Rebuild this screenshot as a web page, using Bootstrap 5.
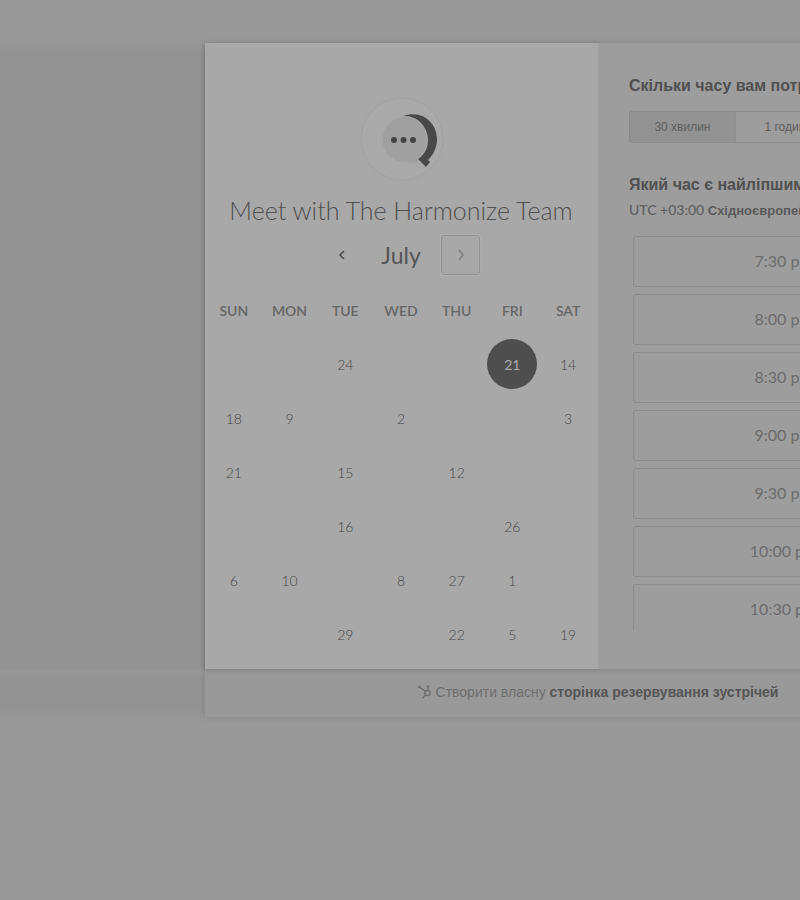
<!DOCTYPE html>
<html lang="uk">
<head>
<meta charset="utf-8">
<meta name="viewport" content="width=device-width, initial-scale=1">
<title>Meet with The Harmonize Team</title>
<link href="https://cdn.jsdelivr.net/npm/bootstrap@5.3.0/dist/css/bootstrap.min.css" rel="stylesheet">
<style>
body{background:#999;color:#555;font-family:"Liberation Sans",Arial,sans-serif}
.stage{padding:43px 0 24px;overflow:hidden}
.side-shade{flex:0 0 205px;margin-top:-6px;margin-bottom:-4px;background:linear-gradient(to bottom,#999 0,#929292 18px,#929292 calc(100% - 54px),#979797 calc(100% - 50px),#979797 calc(100% - 48px),#929292 calc(100% - 42px),#929292 calc(100% - 14px),#999 100%)}
.scheduler{flex:0 0 786px;border-radius:3px;background:#999;box-shadow:0 1px 7px rgba(0,0,0,.12)}
.panels{box-shadow:0 2px 5px rgba(0,0,0,.1)}
.date-panel{background:#a8a8a8;padding:52px 2px 8px 1px;box-shadow:0 0 4px rgba(0,0,0,.08)}
.time-panel{background:#9d9d9d;padding:33px 31px 0}
.latin{font-family:Lato,"Noto Sans",sans-serif}
.team-name{font-size:25px;line-height:32px;font-weight:300;color:#505050;margin-top:11px}
.month-bar{height:42px;margin-top:8px}
.month-name{font-size:23px;line-height:32px;width:80px;color:#555}
.month-btn{width:39px;height:40px;padding:0;border:1px solid transparent;border-radius:3px;background:none;color:#4c4c4c;line-height:1}
.month-btn svg{margin-bottom:2px}
.month-btn:disabled{border-color:#929292;outline:1px solid #b0b0b0;color:#808080}
.days{table-layout:fixed;width:100%;margin-top:8px;text-align:center;color:#484848;font-size:14px;font-weight:300}
.days th{height:53px;font-weight:600;font-size:14px;color:#666;text-align:center;vertical-align:middle;padding:0}
.days td{height:54px;padding:0;vertical-align:middle}
.picked{width:50px;height:50px;border:0;border-radius:50%;background:#4e4e4e;color:#aaa;padding:0}
.ask{font-size:16px;line-height:20px;font-weight:700;color:#505050}
.lengths{width:318px;height:32px;margin-top:15px;border:1px solid #8a8a8a;border-radius:3px}
.lengths button{border:0;background:none;color:#606060;font-size:12px;padding:0}
.lengths button+button{border-left:1px solid #8f8f8f}
.lengths button.chosen{background:#929292}
.zone{font-size:14px;line-height:20px;font-weight:500;color:#606060;margin-top:5px}
.zone b{font-family:"Liberation Sans",sans-serif;font-size:13px;color:#5a5a5a}
.slots{height:394px;gap:7px;margin-top:15px;padding-left:4px;padding-right:26px;overflow:hidden}
.slots button{flex:0 0 51px;border:1px solid #8b8b8b;border-radius:3px;background:none;color:#6c6c6c;font-size:16px;padding:0 0 2px}
.credit{height:48px;font-size:14px;color:#6e6e6e;padding-bottom:2px}
.credit a{color:#555;font-weight:700;text-decoration:none}
</style>
</head>
<body>
<main class="stage d-flex">
  <div class="side-shade"></div>
  <div class="scheduler">
    <div class="panels d-flex">
      <section class="date-panel w-50 text-center latin">
        <svg class="d-block mx-auto" width="88" height="88" viewBox="0 0 88 88" aria-hidden="true">
          <circle cx="45" cy="44" r="41" fill="#a9a9a9" stroke="#a2a2a2" stroke-width="1"/>
          <circle cx="45" cy="44" r="38" fill="none" stroke="#adadad" stroke-width="1" stroke-dasharray="5 2"/>
          <path d="M46 21C65 14 81 28 80 46C79 54 76 60 71 65L73 67L69 72L61 64C74 56 74 37 63 27C58 22 52 21 46 21Z" fill="#484848"/>
          <path d="M48 22A22.500 22.500 0 1 0 48 67L60 68L61 63C72 55 72 37 63 28C59 24 54 22 48 22Z" fill="#a0a0a0"/>
          <g fill="#444"><circle cx="37" cy="45" r="3"/><circle cx="46.500" cy="45" r="3"/><circle cx="56" cy="45" r="3"/></g>
        </svg>
        <h1 class="team-name mb-0">Meet with The Harmonize Team</h1>
        <div class="month-bar d-flex justify-content-center align-items-center">
          <button class="month-btn" aria-label="Попередній місяць"><svg width="10" height="12" viewBox="0 0 10 12" fill="none" stroke="currentColor" stroke-width="1.600"><path d="M7 2L3 6L7 10"/></svg></button>
          <div class="month-name">July</div>
          <button class="month-btn" disabled aria-label="Наступний місяць"><svg width="10" height="12" viewBox="0 0 10 12" fill="none" stroke="currentColor" stroke-width="1.600"><path d="M3 1L7 6L3 11"/></svg></button>
        </div>
        <table class="days">
          <thead><tr><th>SUN</th><th>MON</th><th>TUE</th><th>WED</th><th>THU</th><th>FRI</th><th>SAT</th></tr></thead>
          <tbody>
            <tr><td></td><td></td><td>24</td><td></td><td></td><td><button class="picked">21</button></td><td>14</td></tr>
            <tr><td>18</td><td>9</td><td></td><td>2</td><td></td><td></td><td>3</td></tr>
            <tr><td>21</td><td></td><td>15</td><td></td><td>12</td><td></td><td></td></tr>
            <tr><td></td><td></td><td>16</td><td></td><td></td><td>26</td><td></td></tr>
            <tr><td>6</td><td>10</td><td></td><td>8</td><td>27</td><td>1</td><td></td></tr>
            <tr><td></td><td></td><td>29</td><td></td><td>22</td><td>5</td><td>19</td></tr>
          </tbody>
        </table>
      </section>
      <section class="time-panel w-50">
        <h2 class="ask mb-0">Скільки часу вам потрібно?</h2>
        <div class="lengths d-flex overflow-hidden">
          <button class="chosen flex-fill w-100">30 хвилин</button>
          <button class="flex-fill w-100">1 година</button>
          <button class="flex-fill w-100">2 години</button>
        </div>
        <h2 class="ask mb-0 mt-4 pt-2">Який час є найліпшим для вас?</h2>
        <div class="zone latin text-nowrap">UTC +03:00 <b>Східноєвропейський час</b></div>
        <div class="slots d-flex flex-column latin">
          <button>7:30 pm</button>
          <button>8:00 pm</button>
          <button>8:30 pm</button>
          <button>9:00 pm</button>
          <button>9:30 pm</button>
          <button>10:00 pm</button>
          <button>10:30 pm</button>
        </div>
      </section>
    </div>
    <footer class="credit d-flex justify-content-center align-items-center gap-1">
      <svg width="14" height="14" viewBox="0 0 14 14" fill="none" stroke="#6e6e6e" stroke-width="1.300" aria-hidden="true"><circle cx="9.500" cy="8" r="2.600"/><path d="M1 1.500L7.500 6.500M10 5.500V1M7.500 10L4.500 13"/><circle cx="10" cy="1.500" r=".7"/><circle cx="1.500" cy="2" r=".7"/></svg>
      <span>Створити власну <a href="#">сторінка резервування зустрічей</a></span>
    </footer>
  </div>
</main>
<script src="https://cdn.jsdelivr.net/npm/bootstrap@5.3.0/dist/js/bootstrap.bundle.min.js"></script>
</body>
</html>
